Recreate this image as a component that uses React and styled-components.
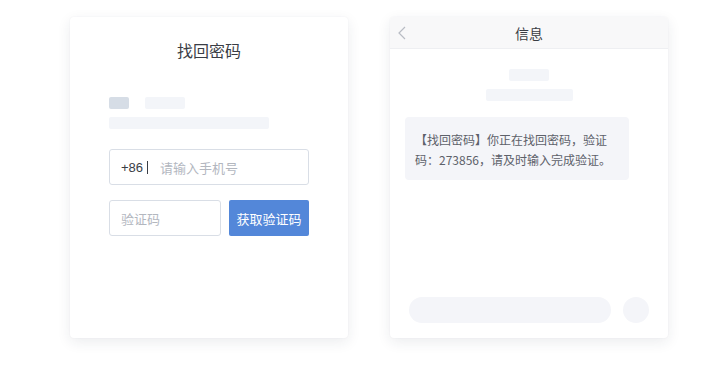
import styled, { createGlobalStyle } from "styled-components";

const GlobalStyle = createGlobalStyle`
  html, body {
    margin: 0;
    padding: 0;
    background: #ffffff;
    font-family: "Noto Sans CJK SC", "Liberation Sans", sans-serif;
  }
`;

const Page = styled.div`
  display: flex;
  gap: 42px;
  padding: 17px 0 0 70px;
  width: 727px;
  height: 378px;
  box-sizing: border-box;
`;

const Card = styled.div`
  width: 278px;
  height: 321px;
  background: #fff;
  border-radius: 4px;
  box-shadow: 0 4px 14px rgba(30, 40, 70, 0.09), 0 0 2px rgba(30, 40, 70, 0.05);
  box-sizing: border-box;
  display: flex;
  flex-direction: column;
  overflow: hidden;
`;

const FormCard = styled(Card)`
  padding: 22px 39px 0;
`;

const Title = styled.div`
  text-align: center;
  font-size: 16px;
  line-height: 22px;
  color: #3a3d45;
  margin-bottom: 36px;
`;

const Block = styled.div`
  width: ${(p) => p.$w}px;
  height: 12px;
  border-radius: 2px;
  background: ${(p) => (p.$dark ? "#d6dde6" : "#f3f5f9")};
  margin: ${(p) => p.$m || "0"};
`;

const BlockRow = styled.div`
  display: flex;
  gap: 16px;
  margin-bottom: 8px;
`;

const Input = styled.div`
  height: 36px;
  box-sizing: border-box;
  border: 1px solid #d9dee6;
  border-radius: 3px;
  display: flex;
  align-items: center;
  padding: 0 11px;
  font-size: 13px;
  color: #b3b7bf;
  width: ${(p) => (p.$w ? p.$w + "px" : "auto")};
`;

const Prefix = styled.span`
  color: #3a3d45;
  font-family: "Liberation Sans", sans-serif;
  margin-right: 12px;
  display: flex;
  align-items: center;
  &::after {
    content: "";
    width: 1px;
    height: 13px;
    background: #3a3d45;
    margin-left: 4px;
  }
`;

const Row = styled.div`
  display: flex;
  gap: 8px;
  margin-top: 15px;
`;

const Button = styled.div`
  width: 80px;
  height: 36px;
  border-radius: 2px;
  background: #5387d9;
  color: #fff;
  font-size: 13px;
  display: flex;
  align-items: center;
  justify-content: center;
`;

const Header = styled.div`
  height: 31px;
  flex-shrink: 0;
  background: #f8f8f9;
  border-bottom: 1px solid #eeeff2;
  display: flex;
  align-items: center;
  justify-content: center;
  position: relative;
  font-size: 14px;
  color: #3a3d45;
`;

const Back = styled.svg`
  position: absolute;
  left: 8px;
  top: 9px;
`;

const Body = styled.div`
  flex: 1;
  display: flex;
  flex-direction: column;
  align-items: center;
  padding: 20px 15px 15px;
`;

const Bubble = styled.div`
  align-self: flex-start;
  width: 224px;
  box-sizing: border-box;
  margin-top: 16px;
  padding: 13px 12px 10px 10px;
  background: #f4f5f9;
  border-radius: 4px;
  font-size: 12px;
  line-height: 20px;
  color: #5d616a;
  word-break: break-all;
`;

const Footer = styled.div`
  margin-top: auto;
  display: flex;
  align-items: center;
  gap: 12px;
  align-self: stretch;
  padding-left: 4px;
`;

const Pill = styled.div`
  width: 202px;
  height: 26px;
  border-radius: 13px;
  background: #f4f5f9;
`;

const Circle = styled.div`
  width: 26px;
  height: 26px;
  border-radius: 50%;
  background: #f4f5f9;
`;

export default function App() {
  return (
    <>
      <GlobalStyle />
      <Page>
        <FormCard>
          <Title>找回密码</Title>
          <BlockRow>
            <Block $w={20} $dark />
            <Block $w={40} />
          </BlockRow>
          <Block $w={160} $m="0 0 20px" />
          <Input>
            <Prefix>+86</Prefix>
            请输入手机号
          </Input>
          <Row>
            <Input $w={112}>验证码</Input>
            <Button>获取验证码</Button>
          </Row>
        </FormCard>
        <Card>
          <Header>
            <Back width="8" height="14" viewBox="0 0 8 14">
              <path d="M7 1 L1 7 L7 13" fill="none" stroke="#b8bcc4" strokeWidth="1.2" />
            </Back>
            信息
          </Header>
          <Body>
            <Block $w={40} $m="0 0 8px" />
            <Block $w={87} />
            <Bubble>【找回密码】你正在找回密码，验证码：273856，请及时输入完成验证。</Bubble>
            <Footer>
              <Pill />
              <Circle />
            </Footer>
          </Body>
        </Card>
      </Page>
    </>
  );
}
